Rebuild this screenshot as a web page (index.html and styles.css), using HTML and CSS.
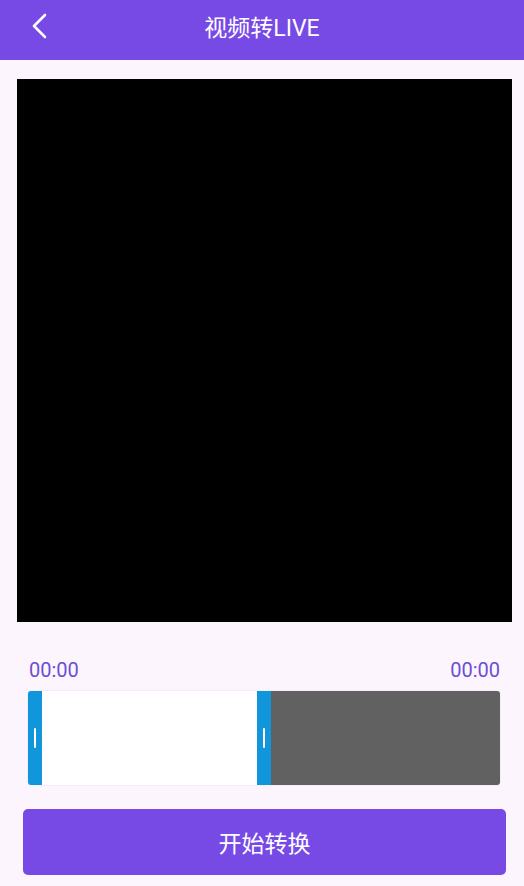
FILE: index.html
```html
<!DOCTYPE html>
<html lang="zh-CN">
<head>
    <meta charset="UTF-8">
    <meta name="viewport" content="width=device-width, initial-scale=1.0">
    <title>视频转LIVE</title>
    <link rel="stylesheet" href="styles.css">
</head>
<body>

    <header class="topbar">
        <button class="back-button" aria-label="返回">
            <svg width="24" height="30" viewBox="0 0 24 30">
                <polyline points="16,4 5,15 16,26" fill="none" stroke="#fff" stroke-width="2.6" stroke-linecap="round" stroke-linejoin="round"/>
            </svg>
        </button>
        <h1>视频转LIVE</h1>
        <span></span>
    </header>

    <div class="page">
        <!-- 视频预览 -->
        <div class="video-box"></div>

        <!-- 时间 -->
        <div class="time-row">
            <span>00:00</span>
            <span>00:00</span>
        </div>

        <!-- 剪辑条 -->
        <div class="trimmer">
            <div class="handle handle-left"><i></i></div>
            <div class="selected"></div>
            <div class="handle"><i></i></div>
            <div class="rest"></div>
        </div>

        <button class="start-button">开始转换</button>
    </div>

</body>
</html>
```

FILE: styles.css
```css
body {
    font-family: Roboto, "Noto Sans CJK SC", sans-serif;
    margin: 0;
    padding: 0;
    background-color: #fdf5fd;
}

.topbar {
    background-color: #774ae6;
    height: 60px;
    display: grid;
    grid-template-columns: 80px 1fr 80px;
    align-items: center;
    color: white;
}

.topbar h1 {
    margin: 0;
    font-size: 23px;
    font-weight: normal;
    text-align: center;
    padding-bottom: 8px;
}

.back-button {
    background: none;
    border: none;
    padding: 0 0 0 29px;
    height: 60px;
    display: flex;
    align-items: center;
    padding-bottom: 8px;
    cursor: pointer;
}

.page {
    display: flex;
    flex-direction: column;
}

.video-box {
    background-color: #000;
    height: 543px;
    margin: 19px 12px 0 17px;
}

.time-row {
    display: flex;
    justify-content: space-between;
    margin: 36px 24px 0 29px;
    color: #6a4fd3;
    font-size: 20px;
    line-height: 24px;
}

.trimmer {
    display: flex;
    height: 94px;
    margin: 9px 24px 0 28px;
    border-radius: 3px;
    overflow: hidden;
    box-shadow: 0 0 0 1px rgba(0, 0, 0, 0.03);
}

.handle {
    width: 14px;
    background-color: #1296db;
    display: flex;
    align-items: center;
    justify-content: center;
}

.handle i {
    display: block;
    width: 2px;
    height: 20px;
    background-color: white;
    border-radius: 1px;
    margin-left: -1px;
}

.selected {
    width: 215px;
    background-color: #fff;
}

.rest {
    flex-grow: 1;
    background-color: #616161;
}

.start-button {
    margin: 24px 18px 0 23px;
    height: 66px;
    background-color: #774ae6;
    color: white;
    border: none;
    border-radius: 5px;
    font-family: inherit;
    font-size: 23px;
    cursor: pointer;
}
```
